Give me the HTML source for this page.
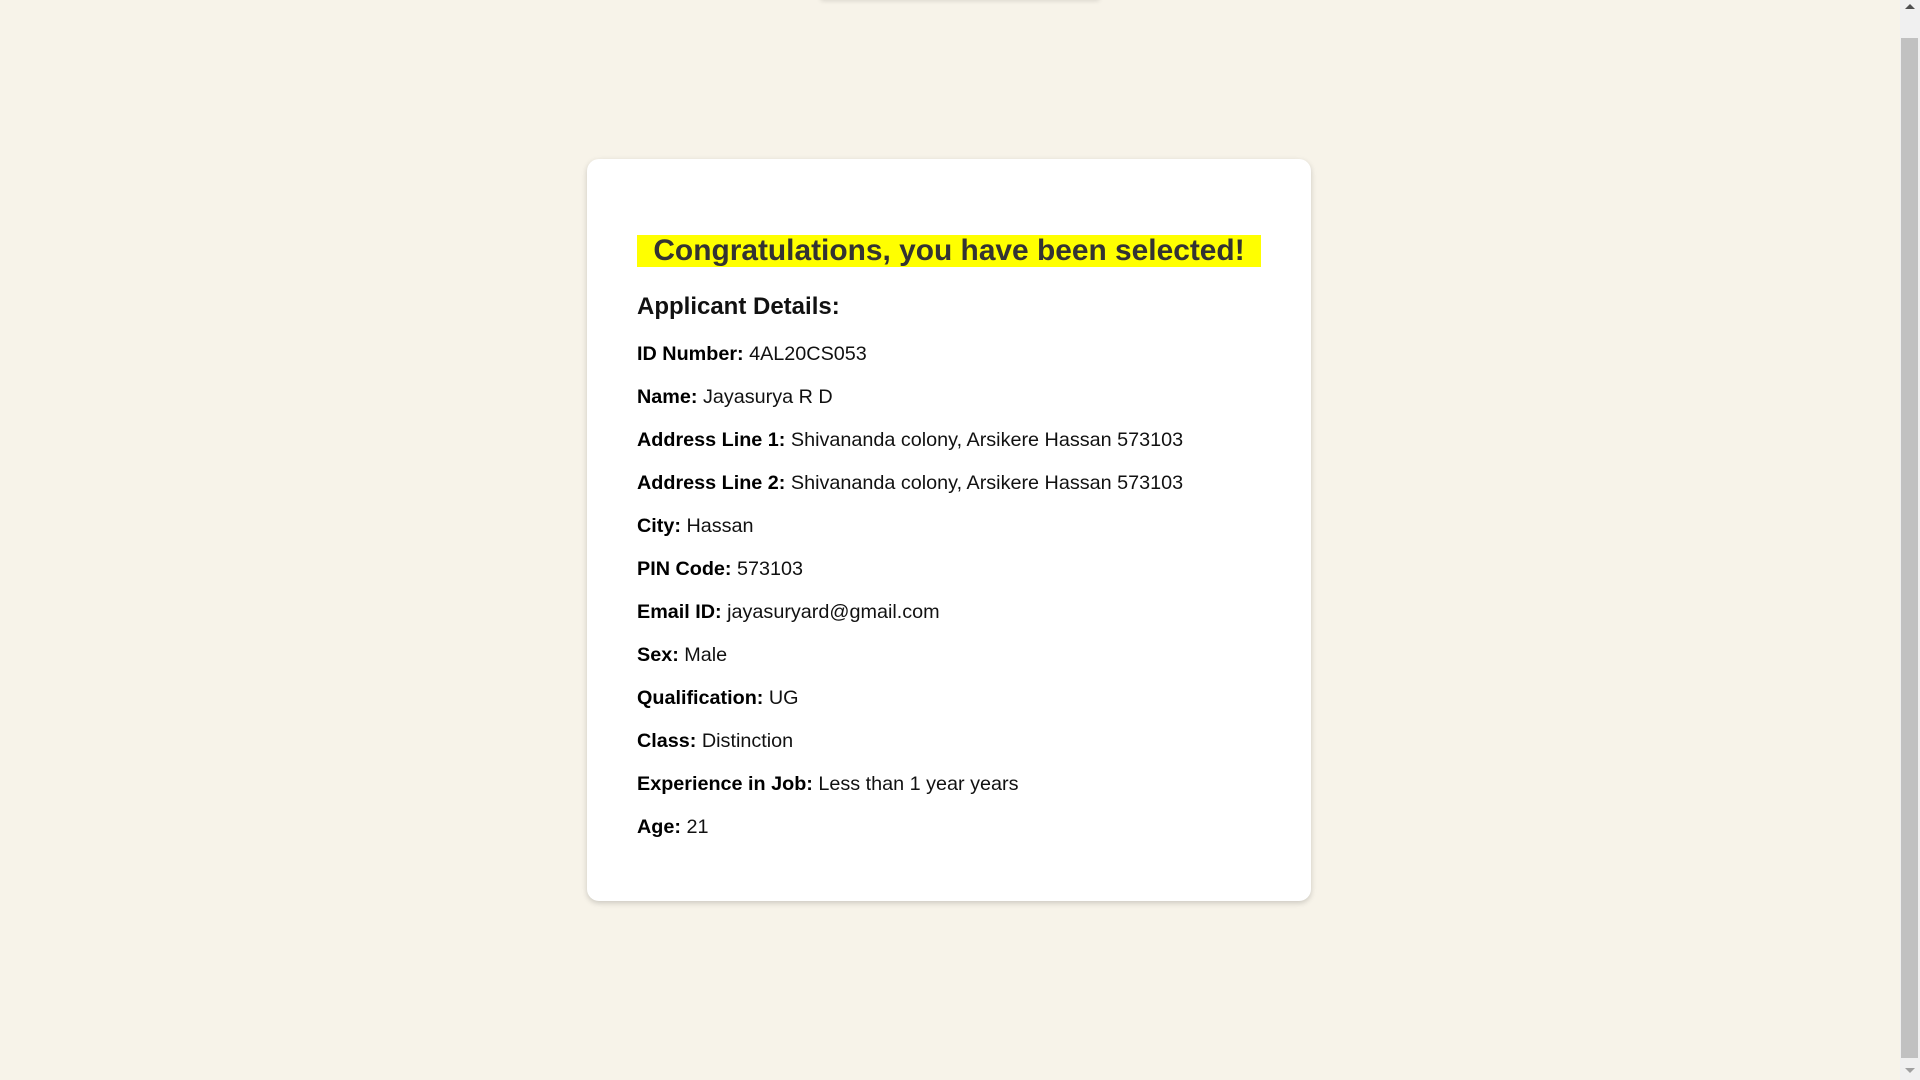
<!DOCTYPE html>
<html><head><style>
html,body{margin:0;padding:0;}
body{width:1920px;height:1080px;background:#f7f3e9;position:relative;overflow:hidden;font-family:"Liberation Sans",Arial,sans-serif;}
.card{position:absolute;left:587px;top:159px;width:724px;height:742px;background:#fff;border-radius:12px;box-shadow:0 2px 6px rgba(0,0,0,0.18);}
.h{position:absolute;left:637px;top:235px;width:624px;height:32px;background:#ffff00;color:#333;font-weight:bold;font-size:29.9px;line-height:32px;text-align:center;white-space:nowrap;}
.sub{position:absolute;left:637px;top:292px;font-size:24px;font-weight:bold;line-height:30px;color:#111;}
.l{position:absolute;left:637px;font-size:19.8px;line-height:24px;color:#111;white-space:nowrap;}
.l b{color:#000;}
.sb{position:absolute;left:1900px;top:0;width:20px;height:1080px;background:#f0f0f0;}
.th{position:absolute;left:1901px;top:38px;width:17px;height:1020px;background:#c1c1c1;}
.top{position:absolute;left:820px;top:-6px;width:280px;height:6px;box-shadow:0 1px 5px rgba(0,0,0,0.12);border-radius:4px;}
</style></head><body>
<div class="top"></div>
<div class="card"></div>
<div class="h">Congratulations, you have been selected!</div>
<div class="sub">Applicant Details:</div>
<div class="l" style="top:342px"><b>ID Number:</b> 4AL20CS053</div>
<div class="l" style="top:385px"><b>Name:</b> Jayasurya R D</div>
<div class="l" style="top:428px"><b>Address Line 1:</b> Shivananda colony, Arsikere Hassan 573103</div>
<div class="l" style="top:471px"><b>Address Line 2:</b> Shivananda colony, Arsikere Hassan 573103</div>
<div class="l" style="top:514px"><b>City:</b> Hassan</div>
<div class="l" style="top:557px"><b>PIN Code:</b> 573103</div>
<div class="l" style="top:600px"><b>Email ID:</b> jayasuryard@gmail.com</div>
<div class="l" style="top:643px"><b>Sex:</b> Male</div>
<div class="l" style="top:686px"><b>Qualification:</b> UG</div>
<div class="l" style="top:729px"><b>Class:</b> Distinction</div>
<div class="l" style="top:772px"><b>Experience in Job:</b> Less than 1 year years</div>
<div class="l" style="top:815px"><b>Age:</b> 21</div>
<div class="sb"></div><div class="th"></div>
<svg style="position:absolute;left:1904px;top:3px" width="12" height="8"><path d="M1 6 L6 1 L11 6Z" fill="#505050"/></svg>
<svg style="position:absolute;left:1904px;top:1066px" width="12" height="8"><path d="M1 2 L6 7 L11 2Z" fill="#a0a0a0"/></svg>
</body></html>
